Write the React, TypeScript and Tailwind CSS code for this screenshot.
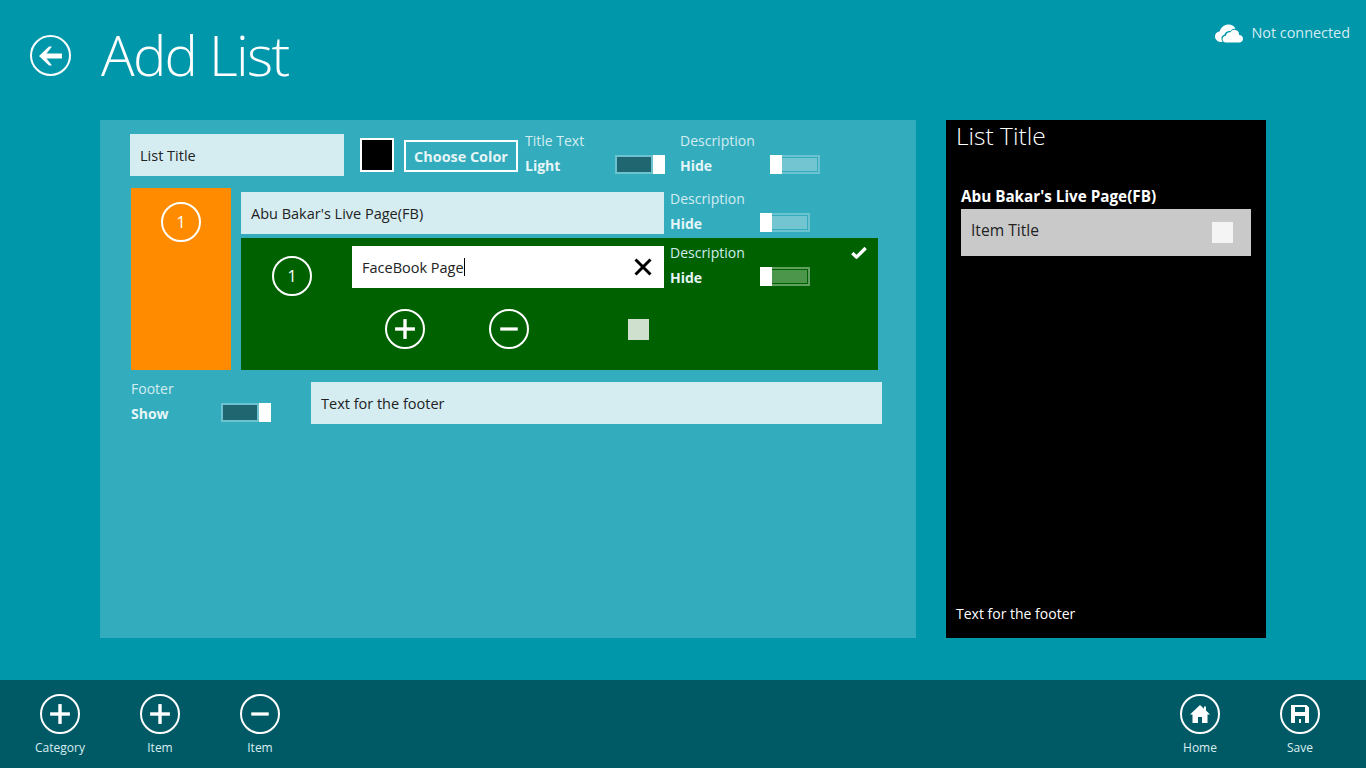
import { Check, Minus, Plus, X } from "lucide-react";
import type { ReactNode } from "react";

function CircleBtn({ children, size = "w-10 h-10" }: { children: ReactNode; size?: string }) {
  return <div className={`${size} shrink-0 rounded-full border-2 border-white flex items-center justify-center text-white`}>{children}</div>;
}

function PlusIcon() {
  return <Plus size={34} strokeWidth={2.4} strokeLinecap="butt" />;
}

function MinusIcon() {
  return <Minus size={30} strokeWidth={2.6} strokeLinecap="butt" />;
}

function Toggle({ on, tone = "teal" }: { on?: boolean; tone?: "teal" | "green" }) {
  const green = tone === "green";
  const track = on ? "bg-[#1f6670]" : green ? "bg-[#4c964c]" : "bg-[#72c5d1]";
  const border = green ? "border-[#60a060]" : "border-[#6cc2ce]";
  return (
    <div className={`w-[50px] h-[19px] flex ${on ? "flex-row-reverse" : ""}`}>
      <div className="w-3 bg-white shrink-0" />
      <div className={`flex-1 border-2 ${border} ${on ? "" : "border-l-0 py-px pr-px"}`}>
        <div className={`h-full ${track}`} />
      </div>
    </div>
  );
}

function SwitchField({ label, value, on, tone, className }: { label: string; value: string; on?: boolean; tone?: "teal" | "green"; className?: string }) {
  return (
    <div className={`flex flex-col ${className ?? ""}`}>
      <div className="text-[14px] leading-[20px] text-[#d3ecf1]">{label}</div>
      <div className="flex items-start justify-between mt-[5px]">
        <span className="text-[14px] leading-[20px] font-bold text-[#e6f5f7]">{value}</span>
        <div className="-mt-px"><Toggle on={on} tone={tone} /></div>
      </div>
    </div>
  );
}

function Field({ value, className }: { value: string; className?: string }) {
  return <input readOnly value={value} className={`h-[42px] bg-[#d5edf1] px-[10px] text-[14.5px] text-[#222] outline-none ${className ?? ""}`} />;
}

function BarButton({ label, children }: { label: string; children: ReactNode }) {
  return (
    <div className="w-[100px] flex flex-col items-center">
      <CircleBtn>{children}</CircleBtn>
      <div className="text-[12px] leading-[16px] mt-[6px] text-[#d9eef1]">{label}</div>
    </div>
  );
}

export default function App() {
  return (
    <div className="w-[1366px] h-[768px] overflow-hidden bg-[#0097ab] flex flex-col text-white font-['Open_Sans',sans-serif]">
      <header className="h-[120px] shrink-0 flex items-start">
        <div className="pl-[30px] pt-[35px]">
          <CircleBtn size="w-[41px] h-[41px]">
            <svg width="25" height="22" viewBox="0 0 25 22" fill="white"><path d="M1 11 L11 1.5 L14 1.5 L8.5 8.5 L24 8.5 L24 13.5 L8.5 13.5 L14 20.5 L11 20.5 Z" /></svg>
          </CircleBtn>
        </div>
        <h1 className="ml-[30px] mt-[16px] text-[56px] leading-[76px] font-light tracking-[-1.7px]">Add List</h1>
        <div className="ml-auto mr-[16px] mt-[22px] flex items-center gap-[8px] text-[14.4px] leading-[22px] text-[#d3ecf1]">
          <svg width="28" height="19" viewBox="0 0 28 19" fill="white"><path d="M7 18 C3 18 0 16 0 12.5 C0 9.5 2 8 4.5 7.5 C6 3 10 0.5 13.5 0.5 C16.5 0.5 19 2 20.5 4.5 C18.5 4.5 16.5 5.5 15.5 7 C13 6.5 10 8 9.5 10.5 C7.5 11 6 13 6.5 15 C6.6 16.2 7 17.2 7.8 18 Z" /><path d="M11 18.5 C8.8 18.5 7.5 17 7.5 15 C7.5 13 9 12 11 11.8 C11 9.5 13 8 15.5 8.3 C16.5 6.5 18.5 5.7 20.3 5.9 C22.8 6.2 24.3 8.3 24 10.8 C26.3 11 28 12.5 28 14.7 C28 17 26.3 18.5 24 18.5 Z" /></svg>
          <span>Not connected</span>
        </div>
      </header>

      <main className="h-[518px] shrink-0 flex pl-[100px] gap-[30px]">
        <section className="w-[816px] bg-[#33acbd] pl-[30px] pt-[14px]">
          <div className="flex items-start h-[42px]">
            <Field value="List Title" className="w-[214px]" />
            <div className="ml-[16px] mt-[4px] w-[34px] h-[34px] bg-black border-2 border-white" />
            <button className="ml-[10px] mt-[6px] w-[114px] h-[32px] border-2 border-white pt-px text-[14.4px] font-bold text-[#e6f5f7]">Choose Color</button>
            <SwitchField label="Title Text" value="Light" on className="ml-[7px] w-[140px] -mt-[3px]" />
            <SwitchField label="Description" value="Hide" className="ml-[15px] w-[140px] -mt-[3px]" />
          </div>

          <div className="flex mt-[12px] ml-px">
            <div className="w-[100px] h-[182px] bg-[#ff8c00] flex justify-center pt-[14px]">
              <CircleBtn><span className="text-[16px]">1</span></CircleBtn>
            </div>
            <div className="ml-[10px] w-[637px] pt-[4px]">
              <div className="flex items-start h-[46px]">
                <Field value="Abu Bakar's Live Page(FB)" className="w-[423px]" />
                <SwitchField label="Description" value="Hide" className="ml-[6px] w-[140px] -mt-[3px]" />
              </div>
              <div className="h-[132px] bg-[#006100] flex flex-col pt-[8px]">
                <div className="flex items-start h-[42px]">
                  <div className="ml-[31px] mt-[10px]"><CircleBtn><span className="text-[16px]">1</span></CircleBtn></div>
                  <div className="ml-[40px] w-[312px] h-[42px] bg-white flex items-center pl-[10px] pr-[6px] text-[14.5px] text-[#222]">
                    <span className="pt-[2px]">FaceBook Page</span>
                    <span className="w-px h-[18px] bg-black" />
                    <X className="ml-auto text-black" size={30} strokeWidth={2.4} strokeLinecap="butt" />
                  </div>
                  <SwitchField label="Description" value="Hide" tone="green" className="ml-[6px] w-[140px] -mt-[3px]" />
                  <Check className="ml-[39px] -mt-[3px]" size={20} strokeWidth={4} strokeLinecap="butt" />
                </div>
                <div className="flex items-center mt-[21px] ml-[144px]">
                  <CircleBtn><PlusIcon /></CircleBtn>
                  <div className="ml-[64px]"><CircleBtn><MinusIcon /></CircleBtn></div>
                  <div className="ml-[99px] w-[21px] h-[21px] bg-[#cfe0cf]" />
                </div>
              </div>
            </div>
          </div>

          <div className="flex items-start mt-[12px] ml-px">
            <SwitchField label="Footer" value="Show" on className="w-[140px] -mt-[3px]" />
            <Field value="Text for the footer" className="ml-[40px] w-[571px]" />
          </div>
        </section>

        <aside className="w-[320px] bg-black flex flex-col">
          <div className="pl-[10px] text-[24.5px] leading-[32px] font-light">List Title</div>
          <div className="pl-[15px] mt-[34px] text-[15.25px] leading-[20px] font-bold">Abu Bakar's Live Page(FB)</div>
          <div className="ml-[15px] mt-[3px] w-[290px] h-[47px] bg-[#c9c9c9] flex items-center justify-between pl-[10px] pr-[18px] text-[15.6px] text-[#222]">
            <span className="pb-[3px]">Item Title</span>
            <div className="w-[21px] h-[21px] bg-[#f4f4f4]" />
          </div>
          <div className="mt-auto pl-[10px] pb-[14px] text-[14px] leading-[20px]">Text for the footer</div>
        </aside>
      </main>

      <footer className="mt-[42px] h-[88px] bg-[#005a66] flex items-start pt-[14px] px-[10px]">
        <BarButton label="Category"><PlusIcon /></BarButton>
        <BarButton label="Item"><PlusIcon /></BarButton>
        <BarButton label="Item"><MinusIcon /></BarButton>
        <div className="ml-auto flex pr-[6px]">
          <BarButton label="Home">
            <svg width="20" height="18" viewBox="0 0 20 18" fill="white"><path d="M10 0 L14 3.8 L14 1.5 L16 1.5 L16 5.6 L20 9.5 L17.5 9.5 L17.5 18 L12 18 L12 12 L8 12 L8 18 L2.5 18 L2.5 9.5 L0 9.5 Z" /></svg>
          </BarButton>
          <BarButton label="Save">
            <svg width="18" height="18" viewBox="0 0 18 18" fill="white" fillRule="evenodd"><path d="M0 0 L15.5 0 L18 2.5 L18 18 L0 18 Z M4 2 L4 7 L14 7 L14 2 Z M4 11 L4 18 L8 18 L8 14 L10 14 L10 18 L14 18 L14 11 Z" /></svg>
          </BarButton>
        </div>
      </footer>
    </div>
  );
}
